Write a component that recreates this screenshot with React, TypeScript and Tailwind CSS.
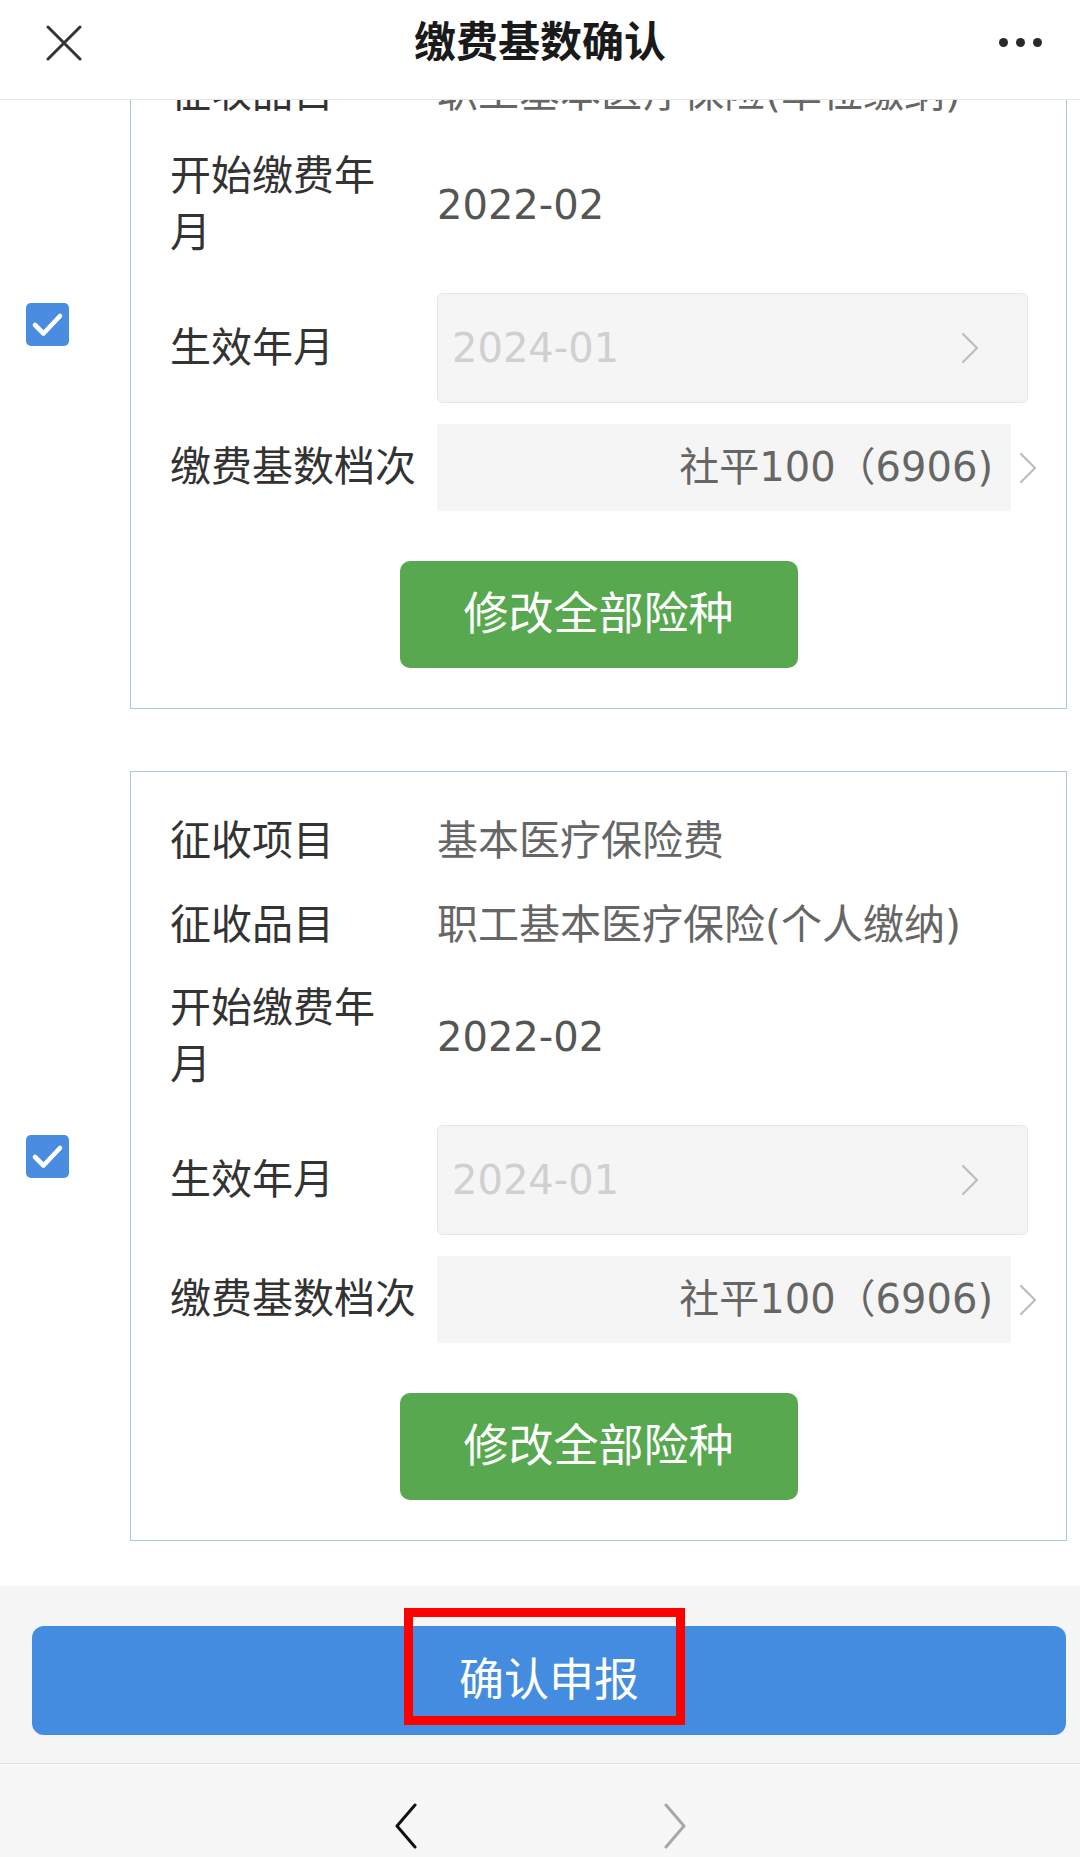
import React from "react";

function Chevron({ className }: { className?: string }) {
  return (
    <svg viewBox="0 0 18 32" className={className} fill="none">
      <path d="M2 2 L16 16 L2 30" stroke="currentColor" strokeWidth="2.2" strokeLinecap="round" strokeLinejoin="round" />
    </svg>
  );
}

function Checkbox() {
  return (
    <div className="w-[43px] h-[43px] rounded-[5px] bg-[#4a8de0] flex items-center justify-center">
      <svg viewBox="0 0 43 43" className="w-[43px] h-[43px]" fill="none">
        <path d="M9 22 L17.5 30.5 L34 13" stroke="#ffffff" strokeWidth="4.6" strokeLinecap="round" strokeLinejoin="round" />
      </svg>
    </div>
  );
}

function Row({ label, value }: { label: string; value: string }) {
  return (
    <div className="h-[84px] flex items-center pl-[39px] pr-[29px]">
      <div className="w-[267px] shrink-0 text-[41px] leading-[57px] text-[#333]">{label}</div>
      <div className="flex-1 text-[41px] leading-[57px] text-[#666] whitespace-nowrap">{value}</div>
    </div>
  );
}

function Card({ item, pin }: { item: string; pin: string }) {
  return (
    <div className="flex items-center">
      <div className="w-[130px] shrink-0 pl-[26px] flex items-center">
        <Checkbox />
      </div>
      <div className="w-[937px] border border-[#a9cbd5] pt-[27px] pb-[40px] flex flex-col">
        <Row label="征收项目" value={item} />
        <Row label="征收品目" value={pin} />
        <div className="py-[13px] flex items-center pl-[39px] pr-[29px]">
          <div className="w-[267px] shrink-0 text-[41px] leading-[57px] text-[#333]">
            开始缴费年
            <br />
            月
          </div>
          <div className="flex-1 text-[40px] leading-[57px] text-[#555]">2022-02</div>
        </div>
        <div className="pt-[18px] pb-[21px] flex items-center pl-[39px] pr-[29px]">
          <div className="w-[267px] shrink-0 text-[41px] leading-[57px] text-[#333]">生效年月</div>
          <div className="flex-1 mr-[9px] h-[110px] rounded-[6px] border border-[#e6e6e6] bg-[#f5f5f5] flex items-center justify-between pl-[14px] pr-[48px]">
            <span className="text-[40px] leading-[57px] text-[#d0d0d0]">2024-01</span>
            <Chevron className="w-[18px] h-[32px] text-[#bdbdbd]" />
          </div>
        </div>
        <div className="flex items-center pl-[39px] pr-[29px]">
          <div className="w-[267px] shrink-0 text-[41px] leading-[57px] text-[#333] whitespace-nowrap">缴费基数档次</div>
          <div className="flex-1 h-[87px] bg-[#f5f5f5] flex items-center justify-end pr-[18px]">
            <span className="text-[40px] leading-[57px] text-[#666] whitespace-nowrap">社平100（6906)</span>
          </div>
          <Chevron className="ml-[8px] w-[18px] h-[32px] text-[#bdbdbd]" />
        </div>
        <div className="mt-[50px] flex justify-center">
          <button className="w-[398px] h-[107px] rounded-[10px] bg-[#57a84e] text-white text-[45px] leading-[60px]">
            修改全部险种
          </button>
        </div>
      </div>
    </div>
  );
}

export default function App() {
  return (
    <div className="w-[1080px] h-[1857px] flex flex-col bg-white overflow-hidden font-['DejaVu_Sans','Noto_Sans_CJK_SC',sans-serif]">
      <header className="h-[100px] shrink-0 relative z-10 bg-white border-b border-[#e6e6e6] flex items-center justify-between pl-[46px] pr-[38px] pb-[14px]">
        <svg viewBox="0 0 36 36" className="w-[36px] h-[36px]" fill="none">
          <path d="M2 2 L34 34 M34 2 L2 34" stroke="#333333" strokeWidth="3" strokeLinecap="round" />
        </svg>
        <div className="absolute left-0 right-0 top-0 h-[86px] flex items-center justify-center pointer-events-none">
          <span className="text-[42px] leading-[56px] font-bold text-[#1a1a1a]">缴费基数确认</span>
        </div>
        <div className="flex items-center gap-[8px]">
          <div className="w-[9px] h-[9px] rounded-full bg-[#2a2a2a]" />
          <div className="w-[9px] h-[9px] rounded-full bg-[#2a2a2a]" />
          <div className="w-[9px] h-[9px] rounded-full bg-[#2a2a2a]" />
        </div>
      </header>
      <main className="flex-1 overflow-hidden">
        <div className="mt-[-161px] flex flex-col gap-[62px]">
          <Card item="基本医疗保险费" pin="职工基本医疗保险(单位缴纳)" />
          <Card item="基本医疗保险费" pin="职工基本医疗保险(个人缴纳)" />
        </div>
      </main>
      <div className="h-[177px] shrink-0 bg-[#f5f5f5] relative pt-[40px]">
        <button className="ml-[32px] mr-[14px] w-[1034px] h-[109px] rounded-[12px] bg-[#448ce0] text-white text-[45px] leading-[60px]">
          确认申报
        </button>
        <div className="absolute left-[404px] top-[22px] w-[281px] h-[117px] border-[9px] border-[#ff0000]" />
      </div>
      <div className="h-[94px] shrink-0 bg-[#f7f7f7] border-t border-[#e2e2e2] flex items-center justify-center gap-[245px] pt-[30px]">
        <svg viewBox="0 0 24 46" className="w-[24px] h-[46px]" fill="none">
          <path d="M21 2 L3 23 L21 44" stroke="#111111" strokeWidth="3" strokeLinecap="round" strokeLinejoin="round" />
        </svg>
        <svg viewBox="0 0 24 46" className="w-[24px] h-[46px]" fill="none">
          <path d="M3 2 L21 23 L3 44" stroke="#a8a8a8" strokeWidth="3" strokeLinecap="round" strokeLinejoin="round" />
        </svg>
      </div>
    </div>
  );
}
